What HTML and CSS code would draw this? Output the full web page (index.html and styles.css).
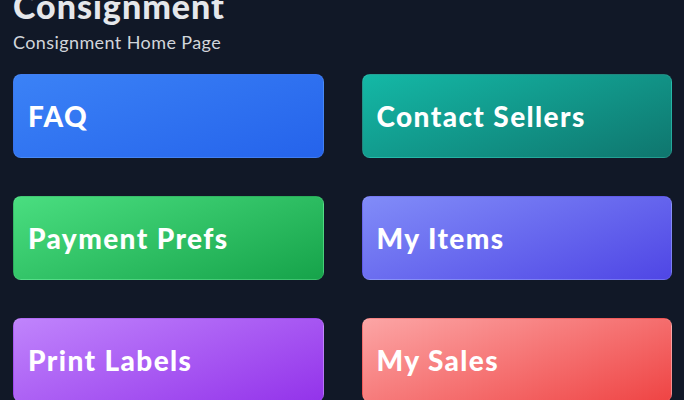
FILE: index.html
```html
<!DOCTYPE html>
<html lang="en">
<head>
    <meta charset="UTF-8">
    <meta name="viewport" content="width=device-width, initial-scale=1.0">
    <title>Consignment</title>
    <link rel="stylesheet" href="styles.css">
</head>
<body>
    <div class="page">
        <header class="page-header">
            <h1>Consignment</h1>
            <p class="subtitle">Consignment Home Page</p>
        </header>
        <nav class="tiles">
            <a class="tile tile-blue" href="#">FAQ</a>
            <a class="tile tile-teal" href="#">Contact Sellers</a>
            <a class="tile tile-green" href="#">Payment Prefs</a>
            <a class="tile tile-indigo" href="#">My Items</a>
            <a class="tile tile-purple" href="#">Print Labels</a>
            <a class="tile tile-red" href="#">My Sales</a>
        </nav>
    </div>
</body>
</html>
```

FILE: styles.css
```css
/* General Styles */
body {
    margin: 0;
    padding: 0;
    background-color: #111827;
    font-family: 'Lato', 'Open Sans', sans-serif;
    color: #e5e7eb;
    overflow: hidden;
}

.page {
    padding: 0 12px 0 13px;
}

.page-header {
    margin-top: -14px;
}

h1 {
    margin: 0;
    font-size: 34px;
    font-weight: 900;
    line-height: 40px;
    letter-spacing: 1px;
    color: #e5e7eb;
}

.subtitle {
    margin: 4px 0 0;
    font-size: 18px;
    line-height: 24px;
    letter-spacing: 0.4px;
    color: #d1d5db;
}

.tiles {
    display: grid;
    grid-template-columns: 1fr 1fr;
    column-gap: 38px;
    row-gap: 38px;
    margin-top: 20px;
}

.tile {
    display: flex;
    align-items: center;
    height: 84px;
    box-sizing: border-box;
    padding: 0 14px;
    border-radius: 8px;
    border: 1px solid rgba(255, 255, 255, 0.08);
    color: #fff;
    font-size: 28px;
    font-weight: 900;
    letter-spacing: 1.4px;
    text-decoration: none;
}

.tile-blue { background: linear-gradient(160deg, #3b82f6, #2563eb); }
.tile-teal { background: linear-gradient(160deg, #14b8a6, #0f766e); }
.tile-green { background: linear-gradient(160deg, #4ade80, #16a34a); }
.tile-indigo { background: linear-gradient(160deg, #818cf8, #4f46e5); }
.tile-purple { background: linear-gradient(160deg, #c084fc, #9333ea); }
.tile-red { background: linear-gradient(160deg, #fca5a5, #ef4444); }
```
